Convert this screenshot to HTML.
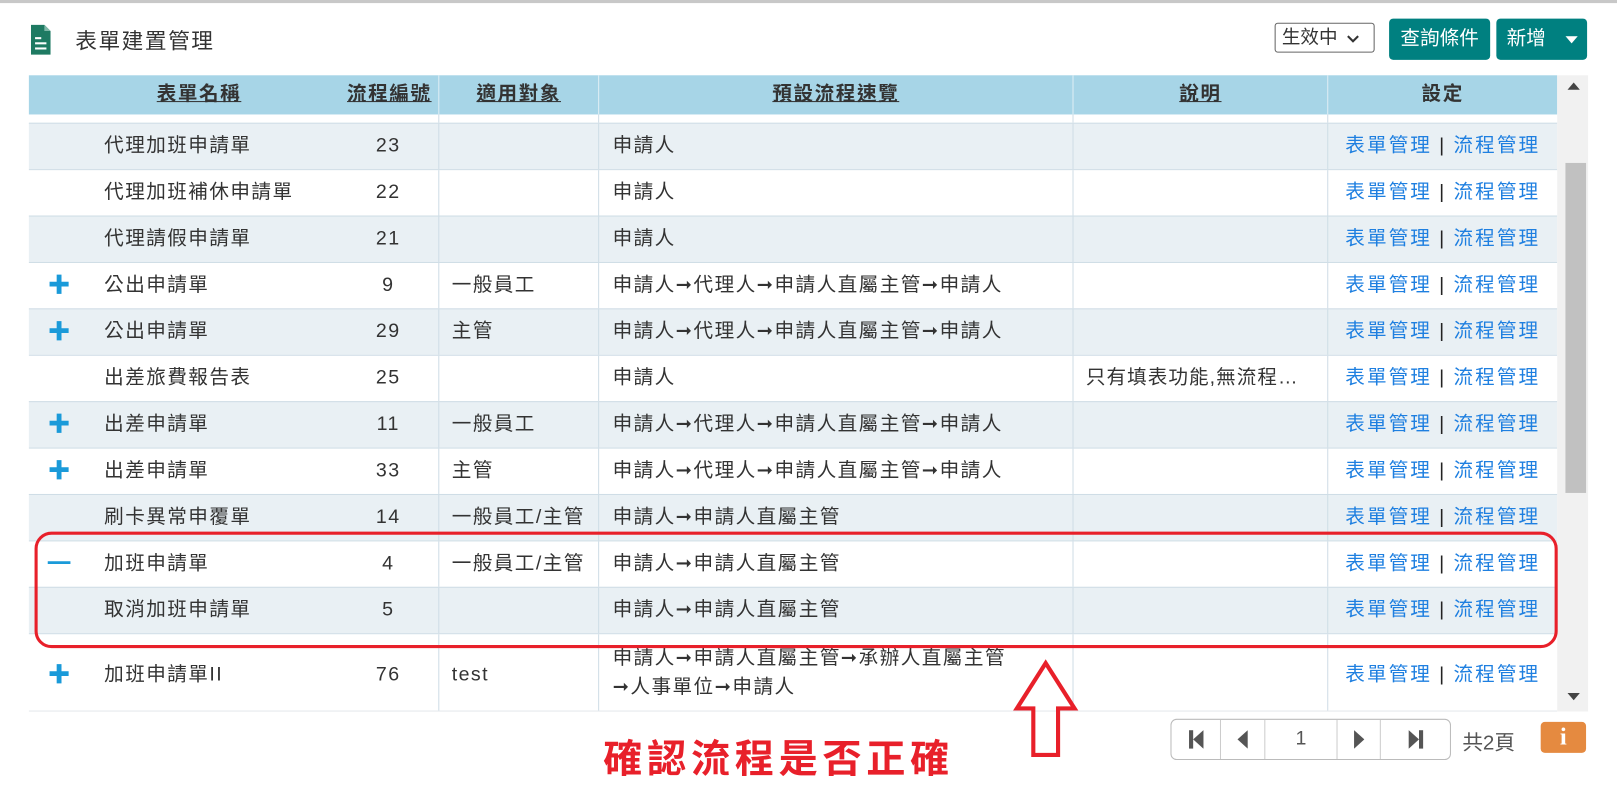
<!DOCTYPE html>
<html><head><meta charset="utf-8"><style>
*{box-sizing:border-box;margin:0;padding:0}
body{width:1617px;height:790px;background:#fff;font-family:"Liberation Sans","Noto Sans CJK TC",sans-serif;color:#333;position:relative;overflow:hidden}
#w{position:absolute;left:0;top:0;width:1568px;height:766px;transform:scale(1.03125);transform-origin:0 0}
.abs{position:absolute}
.btn{background:#008080;color:#fff;border-radius:4px;font-size:19px;height:40px;line-height:40px;text-align:center}
.row{position:absolute;left:28px;width:1482px;height:45px;border-top:1px solid #cfdde6;font-size:19px;line-height:44px;letter-spacing:1.4px}
.row.s{background:#e9f0f4}
.row>div{position:absolute;top:0;height:100%;white-space:nowrap}
.c1{left:73px}
.c2{left:300px;width:97px;text-align:center}
.c3{left:397px;width:155px;padding-left:12px;border-left:1px solid #cfdde6}
.c4{left:552px;width:460px;padding-left:13px;border-left:1px solid #cfdde6}
.c5{left:1012px;width:247px;padding-left:12px;border-left:1px solid #cfdde6;letter-spacing:1px}
.c6{left:1259px;width:223px;text-align:center;border-left:1px solid #cfdde6;letter-spacing:2px}
.pl{left:0;width:60px;text-align:center;color:#1a9ad9;font-weight:bold;font-size:22px}
a{color:#1e7fe0;text-decoration:none}
.bar{color:#222;margin:0 7px}
.hd{position:absolute;left:28px;top:73px;width:1482px;height:38px;background:#a7d5e7;font-size:19px;font-weight:bold;line-height:38px;letter-spacing:1.5px}
.hd>div{position:absolute;top:0;height:38px;text-align:center}
.hd u{text-decoration:underline}
</style></head><body>
<div id="w">
<div class="abs" style="left:0;top:0;width:1568px;height:3px;background:#c8c8c8"></div>
<svg class="abs" style="left:30px;top:24px" width="20" height="30"><path d="M0 0H13L19 6V29H0Z" fill="#1e7a62"/><path d="M13 0V6H19" fill="#7fb8a8"/><rect x="4" y="12" width="6" height="2" fill="#fff"/><rect x="4" y="17" width="11" height="2" fill="#fff"/><rect x="4" y="22" width="11" height="2" fill="#fff"/></svg>
<div class="abs" style="left:73px;top:24px;font-size:21px;letter-spacing:1.5px">表單建置管理</div>
<div class="abs" style="left:1236px;top:22px;width:97px;height:29px;border:1px solid #666;border-radius:3px;font-size:18px;line-height:27px;padding-left:6px">生效中 <svg width="12" height="8" style="margin-left:4px"><path d="M1 1L6 6L11 1" stroke="#333" stroke-width="2" fill="none"/></svg></div>
<div class="abs btn" style="left:1347px;top:18px;width:98px">查詢條件</div>
<div class="abs btn" style="left:1451px;top:18px;width:88px;text-align:left;padding-left:10px">新增 <svg width="12" height="8" style="margin-left:14px"><path d="M0 0H12L6 7Z" fill="#fff"/></svg></div>
<div class="hd">
<div style="left:100px;width:130px"><u>表單名稱</u></div>
<div style="left:302px;width:95px"><u>流程編號</u></div>
<div style="left:397px;width:155px;border-left:1px solid #dfeef5"><u>適用對象</u></div>
<div style="left:552px;width:460px;border-left:1px solid #dfeef5"><u>預設流程速覽</u></div>
<div style="left:1012px;width:247px;border-left:1px solid #dfeef5"><u>說明</u></div>
<div style="left:1259px;width:223px;border-left:1px solid #dfeef5">設定</div>
</div>
<div class="abs" style="left:425px;top:111px;width:1px;height:8px;background:#cfdde6"></div>
<div class="abs" style="left:580px;top:111px;width:1px;height:8px;background:#cfdde6"></div>
<div class="abs" style="left:1040px;top:111px;width:1px;height:8px;background:#cfdde6"></div>
<div class="abs" style="left:1287px;top:111px;width:1px;height:8px;background:#cfdde6"></div>

<div class="row s" style="top:119px"><div class="c1">代理加班申請單</div><div class="c2">23</div><div class="c3"></div><div class="c4">申請人</div><div class="c5"></div><div class="c6"><a>表單管理</a><span class="bar">|</span><a>流程管理</a></div></div>
<div class="row" style="top:164px"><div class="c1">代理加班補休申請單</div><div class="c2">22</div><div class="c3"></div><div class="c4">申請人</div><div class="c5"></div><div class="c6"><a>表單管理</a><span class="bar">|</span><a>流程管理</a></div></div>
<div class="row s" style="top:209px"><div class="c1">代理請假申請單</div><div class="c2">21</div><div class="c3"></div><div class="c4">申請人</div><div class="c5"></div><div class="c6"><a>表單管理</a><span class="bar">|</span><a>流程管理</a></div></div>
<div class="row" style="top:254px"><div class="pl">✚</div><div class="c1">公出申請單</div><div class="c2">9</div><div class="c3">一般員工</div><div class="c4">申請人➞代理人➞申請人直屬主管➞申請人</div><div class="c5"></div><div class="c6"><a>表單管理</a><span class="bar">|</span><a>流程管理</a></div></div>
<div class="row s" style="top:299px"><div class="pl">✚</div><div class="c1">公出申請單</div><div class="c2">29</div><div class="c3">主管</div><div class="c4">申請人➞代理人➞申請人直屬主管➞申請人</div><div class="c5"></div><div class="c6"><a>表單管理</a><span class="bar">|</span><a>流程管理</a></div></div>
<div class="row" style="top:344px"><div class="c1">出差旅費報告表</div><div class="c2">25</div><div class="c3"></div><div class="c4">申請人</div><div class="c5">只有填表功能,無流程…</div><div class="c6"><a>表單管理</a><span class="bar">|</span><a>流程管理</a></div></div>
<div class="row s" style="top:389px"><div class="pl">✚</div><div class="c1">出差申請單</div><div class="c2">11</div><div class="c3">一般員工</div><div class="c4">申請人➞代理人➞申請人直屬主管➞申請人</div><div class="c5"></div><div class="c6"><a>表單管理</a><span class="bar">|</span><a>流程管理</a></div></div>
<div class="row" style="top:434px"><div class="pl">✚</div><div class="c1">出差申請單</div><div class="c2">33</div><div class="c3">主管</div><div class="c4">申請人➞代理人➞申請人直屬主管➞申請人</div><div class="c5"></div><div class="c6"><a>表單管理</a><span class="bar">|</span><a>流程管理</a></div></div>
<div class="row s" style="top:479px"><div class="c1">刷卡異常申覆單</div><div class="c2">14</div><div class="c3">一般員工/主管</div><div class="c4">申請人➞申請人直屬主管</div><div class="c5"></div><div class="c6"><a>表單管理</a><span class="bar">|</span><a>流程管理</a></div></div>
<div class="row" style="top:524px"><div class="pl">━</div><div class="c1">加班申請單</div><div class="c2">4</div><div class="c3">一般員工/主管</div><div class="c4">申請人➞申請人直屬主管</div><div class="c5"></div><div class="c6"><a>表單管理</a><span class="bar">|</span><a>流程管理</a></div></div>
<div class="row s" style="top:569px"><div class="c1">取消加班申請單</div><div class="c2">5</div><div class="c3"></div><div class="c4">申請人➞申請人直屬主管</div><div class="c5"></div><div class="c6"><a>表單管理</a><span class="bar">|</span><a>流程管理</a></div></div>
<div class="row" style="top:614px;height:76px;line-height:80px;border-bottom:1px solid #e4e8ec"><div class="pl">✚</div><div class="c1">加班申請單II</div><div class="c2">76</div><div class="c3">test</div><div class="c4" style="line-height:28px;padding-top:10px">申請人➞申請人直屬主管➞承辦人直屬主管<br>➞人事單位➞申請人</div><div class="c5"></div><div class="c6"><a>表單管理</a><span class="bar">|</span><a>流程管理</a></div></div>

<div class="abs" style="left:1510px;top:73px;width:30px;height:617px;background:#f1f1f1"></div>
<div class="abs" style="left:1518px;top:158px;width:20px;height:320px;background:#c1c1c1"></div>
<svg class="abs" style="left:1520px;top:80px" width="12" height="8"><path d="M0 7H12L6 0Z" fill="#444"/></svg>
<svg class="abs" style="left:1520px;top:672px" width="12" height="8"><path d="M0 0H12L6 7Z" fill="#444"/></svg>
<svg class="abs" style="left:0;top:0" width="1568" height="766">
<rect x="35" y="517" width="1474" height="110" rx="15" fill="none" stroke="#e8202a" stroke-width="3"/>
<path d="M1014 643L1042 687H1026V732H1002V687H986Z" fill="none" stroke="#e8202a" stroke-width="4"/>
</svg>
<div class="abs" style="left:585px;top:705px;font-size:38px;font-weight:bold;color:#e8202a;letter-spacing:4.5px">確認流程是否正確</div>
<div class="abs" style="left:1135px;top:697px;width:272px;height:40px;border:1px solid #bbb;border-radius:6px;display:flex;font-size:19px;color:#555;text-align:center;line-height:38px">
<div style="width:48px;border-right:1px solid #ccc"><svg width="16" height="18" style="margin-top:10px"><rect x="1" y="0" width="4" height="18" fill="#555"/><path d="M15 0V18L5 9Z" fill="#555"/></svg></div>
<div style="width:43px;border-right:1px solid #ccc"><svg width="10" height="18" style="margin-top:10px"><path d="M10 0V18L0 9Z" fill="#555"/></svg></div>
<div style="width:70px;border-right:1px solid #ccc">1</div>
<div style="width:42px;border-right:1px solid #ccc"><svg width="10" height="18" style="margin-top:10px"><path d="M0 0V18L10 9Z" fill="#555"/></svg></div>
<div style="flex:1"><svg width="16" height="18" style="margin-top:10px"><rect x="11" y="0" width="4" height="18" fill="#555"/><path d="M1 0V18L11 9Z" fill="#555"/></svg></div></div>
<div class="abs" style="left:1418px;top:704px;font-size:20px;color:#555">共2頁</div>
<div class="abs" style="left:1494px;top:700px;width:44px;height:30px;background:#e58a40;border-radius:4px;color:#fff;font-weight:bold;font-size:24px;text-align:center;line-height:30px;font-family:'Liberation Serif',serif">i</div>
</div>
</body></html>
